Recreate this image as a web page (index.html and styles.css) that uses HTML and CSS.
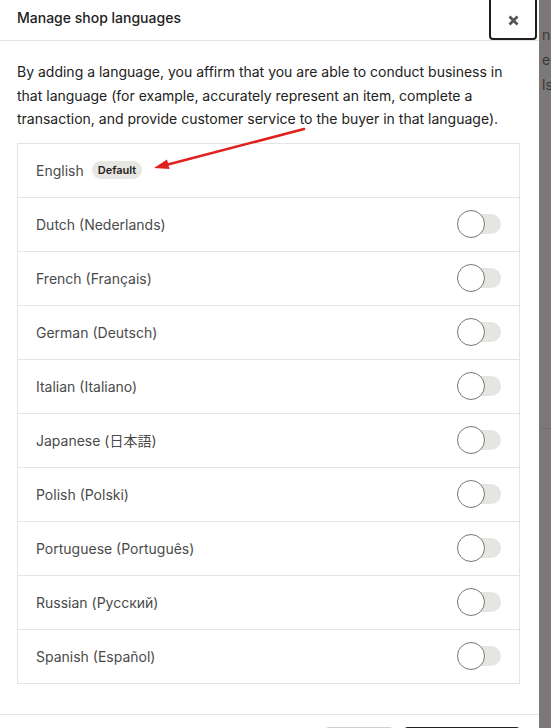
FILE: index.html
```html
<!DOCTYPE html>
<html lang="en">
<head>
<meta charset="utf-8">
<title>Manage shop languages</title>
<link rel="stylesheet" href="styles.css">
</head>
<body>
<div class="page">
  <div class="modal">
    <header class="modal-head">
      <h1 class="modal-title">Manage shop languages</h1>
      <button class="close" aria-label="Close">
        <svg width="11" height="11" viewBox="0 0 11 11"><path d="M1.5 1.5 L9.5 9.5 M9.5 1.5 L1.5 9.5" stroke="#555" stroke-width="2.8" stroke-linecap="butt"/></svg>
      </button>
    </header>
    <div class="modal-body">
      <p class="intro">By adding a language, you affirm that you are able to conduct business in that language (for example, accurately represent an item, complete a transaction, and provide customer service to the buyer in that language).</p>
      <ul class="langs">
        <li class="lang"><span class="lang-name">English</span><span class="badge">Default</span></li>
        <li class="lang"><span class="lang-name">Dutch (Nederlands)</span><span class="toggle"><span class="knob"></span></span></li>
        <li class="lang"><span class="lang-name">French (Français)</span><span class="toggle"><span class="knob"></span></span></li>
        <li class="lang"><span class="lang-name">German (Deutsch)</span><span class="toggle"><span class="knob"></span></span></li>
        <li class="lang"><span class="lang-name">Italian (Italiano)</span><span class="toggle"><span class="knob"></span></span></li>
        <li class="lang"><span class="lang-name">Japanese (日本語)</span><span class="toggle"><span class="knob"></span></span></li>
        <li class="lang"><span class="lang-name">Polish (Polski)</span><span class="toggle"><span class="knob"></span></span></li>
        <li class="lang"><span class="lang-name">Portuguese (Português)</span><span class="toggle"><span class="knob"></span></span></li>
        <li class="lang"><span class="lang-name">Russian (Русский)</span><span class="toggle"><span class="knob"></span></span></li>
        <li class="lang"><span class="lang-name">Spanish (Español)</span><span class="toggle"><span class="knob"></span></span></li>
      </ul>
    </div>
    <footer class="modal-foot">
      <button class="btn btn-secondary" aria-label="Cancel"></button>
      <button class="btn btn-primary" aria-label="Save"></button>
    </footer>
  </div>
  <div class="backdrop">
    <div class="bg-line">n a</div>
    <div class="bg-line">el <span class="bg-red">a</span></div>
    <div class="bg-line">lso</div>
    <div class="bg-rule"></div>
  </div>
</div>
<svg class="arrow" width="551" height="728" viewBox="0 0 551 728">
  <path d="M304 129 L166 165" stroke="#e0201c" stroke-width="2.6" stroke-linecap="round" fill="none"/>
  <path d="M154 168 L167 159.5 L169.5 169 Z" fill="#e0201c"/>
</svg>
</body>
</html>
```

FILE: styles.css
```css
* { box-sizing: border-box; }
html, body { margin: 0; padding: 0; }
body {
  width: 551px;
  height: 728px;
  overflow: hidden;
  font-family: "Inter", "Noto Sans CJK JP", sans-serif;
  color: #222;
  background: #7b7877;
}
.page {
  display: flex;
  height: 728px;
}
.modal {
  width: 539px;
  flex: none;
  background: #fff;
  display: flex;
  flex-direction: column;
}
.modal-head {
  height: 41px;
  border-bottom: 1px solid #e4e4e4;
  display: flex;
  align-items: flex-start;
  justify-content: space-between;
  padding-left: 17px;
}
.modal-title {
  margin: 0;
  font-size: 14px;
  font-weight: 500;
  line-height: 36px;
  color: #222;
}
.close {
  width: 48px;
  height: 46px;
  margin-top: -6px;
  margin-right: 2px;
  border: 2px solid #1f1f1f;
  border-radius: 0 0 4px 4px;
  background: #fff;
  padding: 6px 0 0;
  display: flex;
  align-items: center;
  justify-content: center;
}
.modal-body {
  padding: 19px 19px 0 17px;
}
.intro {
  margin: 0 0 12px;
  font-size: 14px;
  line-height: 23.5px;
  color: #222;
}
.langs {
  list-style: none;
  margin: 0;
  padding: 0;
  border: 1px solid #e4e4e4;
}
.lang {
  height: 54px;
  display: flex;
  align-items: center;
  justify-content: space-between;
  padding: 0 18px 0 18px;
  border-top: 1px solid #e4e4e4;
}
.lang:first-child {
  border-top: none;
  height: 53px;
  justify-content: flex-start;
  gap: 8px;
}
.lang-name {
  font-size: 14px;
  color: #4a4a4a;
}
.badge {
  font-size: 11px;
  font-weight: 600;
  color: #222;
  background: #e7e6e2;
  border-radius: 9px;
  padding: 0 6px;
  height: 18px;
  line-height: 18px;
}
.toggle {
  width: 44px;
  height: 20px;
  border-radius: 10px;
  background: #e6e5e1;
  display: flex;
  align-items: center;
}
.knob {
  width: 28px;
  height: 28px;
  border-radius: 50%;
  background: #fff;
  border: 1px solid #777;
}
.modal-foot {
  margin-top: 30px;
  border-top: 1px solid #e4e4e4;
  padding: 12px 17px 0 0;
  display: flex;
  justify-content: flex-end;
  gap: 7px;
}
.btn {
  height: 40px;
  border-radius: 6px;
}
.btn-secondary {
  width: 72px;
  background: #fff;
  border: 1px solid #cfcfcf;
}
.btn-primary {
  width: 120px;
  background: #222;
  border: 1px solid #222;
}
.backdrop {
  flex: 1;
  padding: 22px 0 0 3px;
  font-family: "Inter", sans-serif;
  font-size: 14px;
  line-height: 25px;
  color: #3a3836;
  white-space: nowrap;
  overflow: hidden;
}
.bg-red { color: #8a2a1e; }
.bg-rule {
  margin-top: 331px;
  height: 1px;
  background: #6f6c6b;
}
.arrow {
  position: absolute;
  left: 0;
  top: 0;
  pointer-events: none;
}
```
